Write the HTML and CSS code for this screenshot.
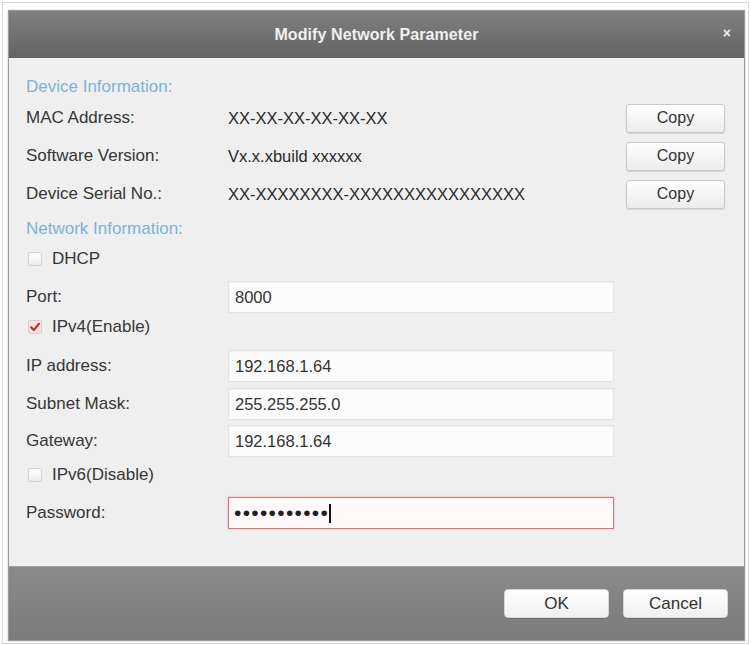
FILE: index.html
```html
<!DOCTYPE html>
<html lang="en">
<head>
<meta charset="utf-8">
<title>Modify Network Parameter</title>
<link rel="stylesheet" href="styles.css">
</head>
<body>
<div class="frame">
  <div class="dialog">
    <div class="titlebar">
      <span class="title">Modify Network Parameter</span>
      <span class="close">×</span>
    </div>
    <div class="content">
      <div class="section-head head-device">Device Information:</div>
      <div class="row row-mac">
        <span class="label">MAC Address:</span>
        <span class="value">XX-XX-XX-XX-XX-XX</span>
        <button class="btn copy">Copy</button>
      </div>
      <div class="row row-gap6">
        <span class="label">Software Version:</span>
        <span class="value">Vx.x.xbuild xxxxxx</span>
        <button class="btn copy">Copy</button>
      </div>
      <div class="row row-gap6">
        <span class="label">Device Serial No.:</span>
        <span class="value">XX-XXXXXXXX-XXXXXXXXXXXXXXXX</span>
        <button class="btn copy">Copy</button>
      </div>
      <div class="section-head head-network">Network Information:</div>
      <div class="check-row row-dhcp">
        <span class="box"></span>
        <span class="check-label">DHCP</span>
      </div>
      <div class="row row-port">
        <span class="label">Port:</span>
        <div class="field">8000</div>
      </div>
      <div class="check-row">
        <span class="box checked">
          <svg viewBox="0 0 14 14" width="14" height="14"><path d="M2.5 7.2 L5.6 10.6 L11.6 3.2" fill="none" stroke="#c42b38" stroke-width="2.5" stroke-linecap="round" stroke-linejoin="round"/></svg>
        </span>
        <span class="check-label">IPv4(Enable)</span>
      </div>
      <div class="row row-ip">
        <span class="label">IP address:</span>
        <div class="field">192.168.1.64</div>
      </div>
      <div class="row row-gap6">
        <span class="label">Subnet Mask:</span>
        <div class="field">255.255.255.0</div>
      </div>
      <div class="row row-gap5">
        <span class="label">Gateway:</span>
        <div class="field">192.168.1.64</div>
      </div>
      <div class="check-row row-ipv6">
        <span class="box"></span>
        <span class="check-label">IPv6(Disable)</span>
      </div>
      <div class="row row-pass">
        <span class="label">Password:</span>
        <div class="field field-error"><span class="dots">•••••••••••</span><span class="caret"></span></div>
      </div>
    </div>
    <div class="footer">
      <button class="btn action">OK</button>
      <button class="btn action">Cancel</button>
    </div>
  </div>
</div>
</body>
</html>
```

FILE: styles.css
```css
html, body {
  margin: 0;
  padding: 0;
  background: #ffffff;
}

body {
  font-family: "Liberation Sans", Arial, sans-serif;
  color: #333333;
}

.frame {
  box-sizing: border-box;
  width: 747px;
  height: 642px;
  margin: 2px 0 0 2px;
  border: 1px solid #d8d8d8;
  padding: 7px 0 0 5px;
}

.dialog {
  box-sizing: border-box;
  width: 737px;
  height: 631px;
  border: 1px solid #9a9a9a;
  display: flex;
  flex-direction: column;
  box-shadow: 0 0 2px rgba(0, 0, 0, 0.25);
}

.titlebar {
  position: relative;
  height: 47px;
  flex: none;
  display: flex;
  align-items: center;
  justify-content: center;
  background: linear-gradient(#808080, #636363);
  color: #f0f0f0;
}

.title {
  font-size: 16px;
  font-weight: bold;
  letter-spacing: 0.1px;
}

.close {
  position: absolute;
  right: 13px;
  top: 14px;
  font-size: 14px;
  font-weight: bold;
  color: #eeeeee;
  line-height: 16px;
}

.content {
  flex: 1;
  background: #efefef;
  padding: 14px 19px 0 17px;
  display: flex;
  flex-direction: column;
}

.section-head {
  height: 30px;
  display: flex;
  align-items: center;
  font-size: 17px;
  color: #7cb3d5;
}

.head-network {
  margin-top: 4px;
}

.row {
  height: 32px;
  display: flex;
  align-items: center;
  flex: none;
}

.row-gap6 { margin-top: 6px; }
.row-gap5 { margin-top: 5px; }
.row-port { margin-top: 8px; }
.row-ip { margin-top: 9px; }
.row-pass { margin-top: 8px; }

.label {
  width: 202px;
  flex: none;
  font-size: 17px;
  color: #363636;
}

.value {
  font-size: 16.5px;
  color: #2a2a2a;
}

.btn {
  font-family: "Liberation Sans", Arial, sans-serif;
  color: #333333;
  border: 1px solid #c8c8c8;
  border-radius: 3px;
  background: linear-gradient(#fefefe, #ececec);
  box-shadow: 0 1px 1px rgba(0, 0, 0, 0.12);
  padding: 0;
  cursor: pointer;
}

.copy {
  margin-left: auto;
  width: 99px;
  height: 29px;
  font-size: 16px;
}

.check-row {
  height: 28px;
  display: flex;
  align-items: center;
  flex: none;
  padding-left: 2px;
}

.row-dhcp { margin-top: 1px; }
.row-ipv6 { margin-top: 4px; }

.box {
  box-sizing: border-box;
  width: 14px;
  height: 14px;
  border: 1px solid #d2d2d2;
  border-radius: 2px;
  background: linear-gradient(#ffffff, #ececec);
  display: flex;
  align-items: center;
  justify-content: center;
}

.box svg {
  display: block;
}

.box.checked {
  background: #f6e4e5;
  border-color: #e2c9cb;
}

.check-label {
  margin-left: 10px;
  font-size: 17px;
  color: #363636;
}

.field {
  box-sizing: border-box;
  width: 386px;
  height: 32px;
  display: flex;
  align-items: center;
  padding-left: 6px;
  background: #fbfbfb;
  border: 1px solid #e2e2e2;
  box-shadow: inset 0 1px 2px rgba(0, 0, 0, 0.05);
  font-size: 16.5px;
  color: #333333;
}

.field-error {
  border: 1px solid #d27a78;
  background: #fffafa;
  box-shadow: 0 0 2px rgba(215, 90, 90, 0.45);
  padding-left: 5px;
}

.dots {
  font-size: 21px;
  letter-spacing: 1.3px;
  color: #1f1f1f;
  line-height: 20px;
}

.caret {
  width: 1.5px;
  height: 19px;
  background: #111111;
  margin-left: 0;
}

.footer {
  height: 74px;
  flex: none;
  display: flex;
  align-items: center;
  justify-content: flex-end;
  gap: 14px;
  padding-right: 16px;
  background: linear-gradient(#8a8a8a, #7b7b7b);
  border-top: 1px solid #a0a0a0;
  box-sizing: border-box;
}

.action {
  width: 105px;
  height: 29px;
  font-size: 17px;
  border-color: #d6d6d6;
  border-radius: 4px;
  background: linear-gradient(#ffffff, #f0f0f0);
}
```
